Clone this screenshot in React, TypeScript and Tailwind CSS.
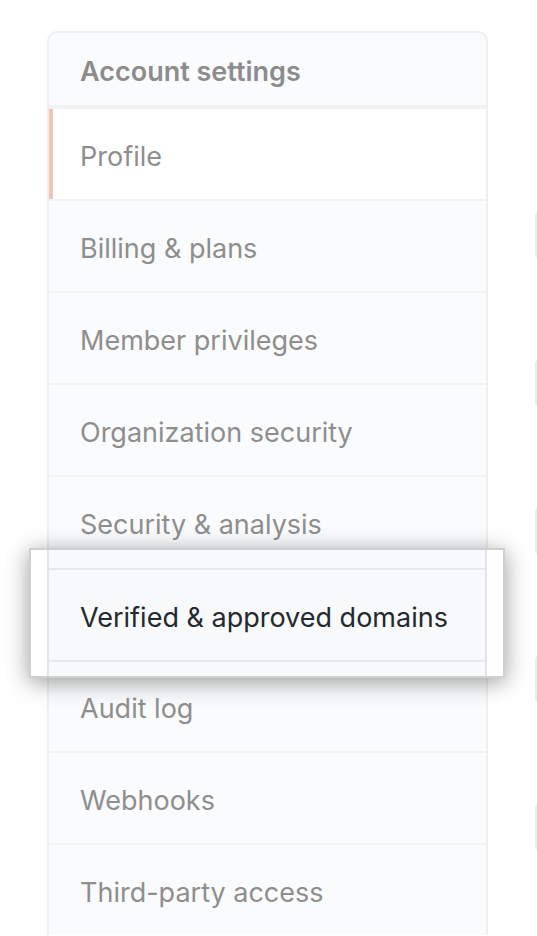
import React from "react"

const items = [
  "Profile",
  "Billing & plans",
  "Member privileges",
  "Organization security",
  "Security & analysis",
  "Verified & approved domains",
  "Audit log",
  "Webhooks",
  "Third-party access",
]

export default function App() {
  return (
    <div
      className="relative h-[936px] w-[537px] overflow-hidden bg-white"
      style={{ fontFamily: "Inter, 'Liberation Sans', Arial, sans-serif" }}
    >
      <div className="flex pt-[31px]">
        {/* Sidebar card */}
        <div className="ml-[47px] w-[441px] shrink-0 overflow-hidden rounded-t-[10px] border-2 border-b-0 border-[#eeeff1] bg-[#fafbfc]">
          <div className="flex h-[76px] items-center border-b-[4px] border-[#f1f2f4] px-[31px] pt-[6px] text-[27px] font-semibold text-[#8c8c8c]">
            Account settings
          </div>
          {items.map((item, i) => (
            <div
              key={item}
              className={
                i === 0
                  ? "flex h-[90px] items-center border-l-4 border-[#f4c4b7] bg-white pl-[27px] pt-[6px] text-[27px] text-[#8e8e8e]"
                  : "flex h-[92px] items-center border-t-2 border-[#f1f2f4] pl-[31px] pt-[6px] text-[27px] text-[#8e8e8e]"
              }
            >
              {item}
            </div>
          ))}
        </div>

        {/* Main content, mostly off-screen */}
        <div className="ml-[47px] flex shrink-0 flex-col gap-[102px] pt-[181px]">
          <div className="h-[46px] w-[300px] rounded-sm border-2 border-[#ececec]" />
          <div className="h-[46px] w-[300px] rounded-sm border-2 border-[#ececec]" />
          <div className="h-[46px] w-[300px] rounded-sm border-2 border-[#ececec]" />
          <div className="h-[46px] w-[300px] rounded-sm border-2 border-[#ececec]" />
          <div className="h-[46px] w-[300px] rounded-sm border-2 border-[#ececec]" />
        </div>
      </div>

      {/* Highlight callout */}
      <div className="absolute left-[29px] top-[548px] w-[476px] border-2 border-[#cfcfcf] bg-white px-4 shadow-[0_4px_22px_rgba(0,0,0,0.4)]">
        <div className="border-x-2 border-[#e1e4e8] bg-[#f8f9fb]">
          <div className="h-[20px] border-b-2 border-[#e6e8eb]" />
          <div className="flex h-[90px] items-center pl-[31px] pt-[6px] text-[27px] text-[#24292e]">
            Verified &amp; approved domains
          </div>
          <div className="h-[16px] border-t-2 border-[#e6e8eb]" />
        </div>
      </div>
    </div>
  )
}
